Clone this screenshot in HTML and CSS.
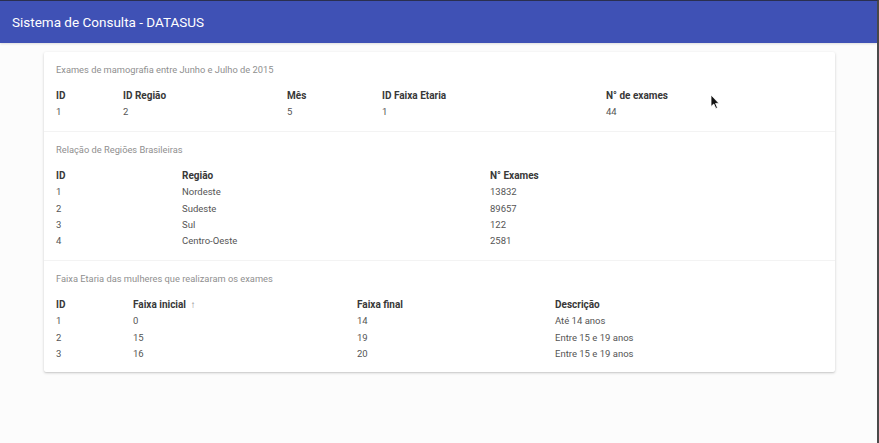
FILE: index.html
```html
<!DOCTYPE html>
<html lang="pt">
<head>
<meta charset="utf-8">
<title>Sistema de Consulta - DATASUS</title>
<link rel="stylesheet" href="styles.css">
</head>
<body>
<div class="frame">
  <header class="toolbar">Sistema de Consulta - DATASUS</header>
  <main class="content">
    <div class="card">
      <section class="section">
        <div class="title">Exames de mamografia entre Junho e Julho de 2015</div>
        <div class="table t1">
          <div class="th">ID</div><div class="th">ID Região</div><div class="th">Mês</div><div class="th">ID Faixa Etaria</div><div class="th">N° de exames</div>
          <div>1</div><div>2</div><div>5</div><div>1</div><div>44</div>
        </div>
      </section>
      <section class="section">
        <div class="title">Relação de Regiões Brasileiras</div>
        <div class="table t2">
          <div class="th">ID</div><div class="th">Região</div><div class="th">N° Exames</div>
          <div>1</div><div>Nordeste</div><div>13832</div>
          <div>2</div><div>Sudeste</div><div>89657</div>
          <div>3</div><div>Sul</div><div>122</div>
          <div>4</div><div>Centro-Oeste</div><div>2581</div>
        </div>
      </section>
      <section class="section">
        <div class="title">Faixa Etaria das mulheres que realizaram os exames</div>
        <div class="table t3">
          <div class="th">ID</div><div class="th">Faixa inicial <span class="sort">↑</span></div><div class="th">Faixa final</div><div class="th">Descrição</div>
          <div>1</div><div>0</div><div>14</div><div>Até 14 anos</div>
          <div>2</div><div>15</div><div>19</div><div>Entre 15 e 19 anos</div>
          <div>3</div><div>16</div><div>20</div><div>Entre 15 e 19 anos</div>
        </div>
      </section>
    </div>
  </main>
  <svg class="cursor" width="10" height="16" viewBox="0 0 10 16"><path d="M1 1 L1 12.5 L3.8 10 L5.8 14.5 L7.5 13.8 L5.6 9.4 L9 9.4 Z" fill="#111" stroke="#fff" stroke-width="0.8"/></svg>
</div>
</body>
</html>
```
FILE: styles.css
```css
html, body {
  margin: 0;
  padding: 0;
  height: 100%;
}
body {
  font-family: Roboto, "Liberation Sans", sans-serif;
  background: #fcfcfc;
}
.frame {
  position: relative;
  box-sizing: border-box;
  height: 443px;
  border-top: 1px solid #2b3050;
  border-right: 2px solid #4a4a4a;
  background: #fcfcfc;
}
.toolbar {
  height: 42px;
  background: #3f51b5;
  color: #fff;
  font-size: 13.5px;
  line-height: 43px;
  padding-left: 12px;
  box-shadow: 0 1px 2px rgba(0,0,0,0.12);
}
.content {
  padding: 9px 42px 0 44px;
}
.card {
  background: #fff;
  box-shadow: 0 1px 3px rgba(0,0,0,0.18), 0 1px 1px rgba(0,0,0,0.06);
  border-radius: 2px;
}
.section {
  padding: 11px 12px 10px 12px;
  border-bottom: 1px solid #f3f3f3;
}
.section:last-child {
  border-bottom: none;
}
.title {
  font-size: 9.3px;
  line-height: 14px;
  color: #8f8f8f;
  margin-bottom: 11px;
}
.table {
  display: grid;
  font-size: 9.5px;
  color: #555;
}
.table > div {
  height: 16.4px;
  line-height: 16.4px;
  white-space: nowrap;
}
.table .th {
  font-size: 10px;
  font-weight: 700;
  color: #383838;
}
.t1 { grid-template-columns: 67px 164px 95px 224px 1fr; }
.t2 { grid-template-columns: 126px 308px 1fr; }
.t3 { grid-template-columns: 77px 224px 198px 1fr; }
.sort {
  font-weight: 400;
  color: #888;
  margin-left: 2px;
}
.cursor {
  position: absolute;
  left: 710px;
  top: 93px;
}
```
